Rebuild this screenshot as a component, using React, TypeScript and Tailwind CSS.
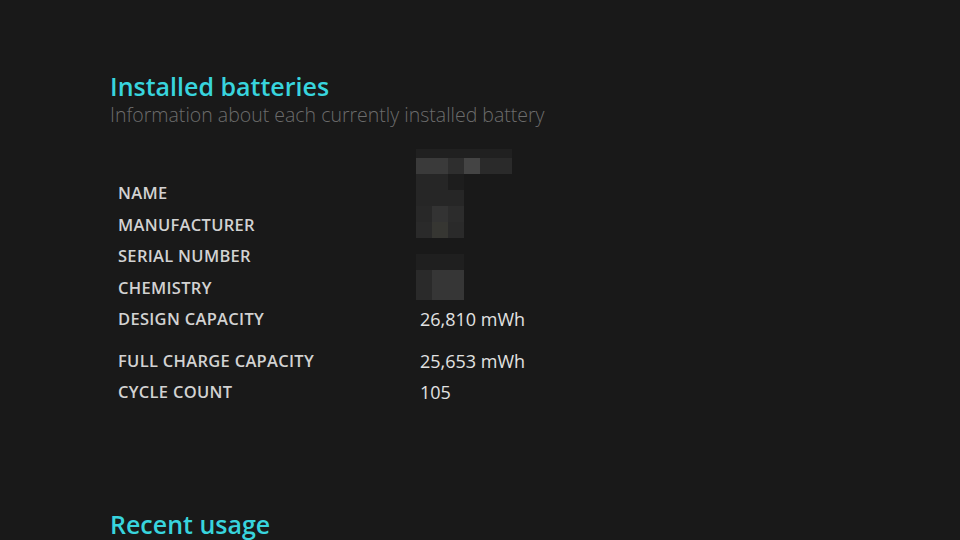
const rows1 = [
  { label: "NAME", value: "" },
  { label: "MANUFACTURER", value: "" },
  { label: "SERIAL NUMBER", value: "" },
  { label: "CHEMISTRY", value: "" },
  { label: "DESIGN CAPACITY", value: "26,810 mWh" },
]

const rows2 = [
  { label: "FULL CHARGE CAPACITY", value: "25,653 mWh" },
  { label: "CYCLE COUNT", value: "105" },
]

// mosaic that hides the name / manufacturer / chemistry values
const blocks: [number, number, number, number, string][] = [
  [0, 0, 96, 9, "#202020"],
  [0, 9, 32, 16, "#3a3a3a"],
  [32, 9, 16, 16, "#2e2e2e"],
  [48, 9, 16, 16, "#444444"],
  [64, 9, 32, 16, "#2a2a2a"],
  [0, 25, 32, 16, "#262626"],
  [32, 25, 16, 16, "#1d1d1d"],
  [0, 41, 48, 16, "#262626"],
  [0, 57, 16, 16, "#282828"],
  [16, 57, 16, 16, "#333333"],
  [32, 57, 16, 16, "#2c2c2c"],
  [0, 73, 16, 16, "#2a2a2a"],
  [16, 73, 16, 16, "#363632"],
  [32, 73, 16, 16, "#2a2a2a"],
  [0, 105, 48, 16, "#1f1f1f"],
  [0, 121, 16, 30, "#2a2a2a"],
  [16, 121, 32, 30, "#363636"],
]

function Table({ rows }: { rows: { label: string; value: string }[] }) {
  return (
    <div className="flex flex-col">
      {rows.map((r) => (
        <div key={r.label} className="flex h-[31.5px] items-center">
          <div className="w-[302px] text-[16.5px] font-semibold tracking-[0.3px] text-[#d2d2d2]">{r.label}</div>
          <div className="text-[18px] text-[#e2e2e2]">{r.value}</div>
        </div>
      ))}
    </div>
  )
}

export default function App() {
  return (
    <div
      className="h-[540px] w-[960px] overflow-hidden bg-[#191919] pl-[110px] pt-[68px]"
      style={{ fontFamily: '"Open Sans", "Noto Sans", sans-serif' }}
    >
      <h1 className="text-[25px] font-semibold leading-[36px] text-[#38d4dd]">Installed batteries</h1>
      <p className="text-[19.5px] font-light leading-[22px] text-[#6c6c6c]">
        Information about each currently installed battery
      </p>

      <div className="relative mt-[52px] pl-[8px]">
        <svg className="absolute left-[306px] top-[-29px]" width="96" height="151" viewBox="0 0 96 151">
          {blocks.map(([x, y, w, h, c], i) => (
            <rect key={i} x={x} y={y} width={w} height={h} fill={c} />
          ))}
        </svg>
        <Table rows={rows1} />
        <div className="mt-[10px]">
          <Table rows={rows2} />
        </div>
      </div>

      <h2 className="mt-[97px] text-[25px] font-semibold leading-[36px] text-[#38d4dd]">Recent usage</h2>
    </div>
  )
}
